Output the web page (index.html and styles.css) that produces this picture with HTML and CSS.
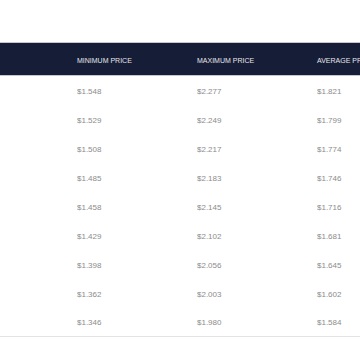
FILE: index.html
```html
<!DOCTYPE html>
<html>
<head>
<meta charset="utf-8">
<link rel="stylesheet" href="styles.css">
</head>
<body>
<div class="wrap">
  <div class="table">
    <div class="row head">
      <div class="cell first"></div>
      <div class="cell">MINIMUM PRICE</div>
      <div class="cell">MAXIMUM PRICE</div>
      <div class="cell">AVERAGE PRICE</div>
    </div>
    <div class="row"><div class="cell first"></div><div class="cell">$1.548</div><div class="cell">$2.277</div><div class="cell">$1.821</div></div>
    <div class="row"><div class="cell first"></div><div class="cell">$1.529</div><div class="cell">$2.249</div><div class="cell">$1.799</div></div>
    <div class="row"><div class="cell first"></div><div class="cell">$1.508</div><div class="cell">$2.217</div><div class="cell">$1.774</div></div>
    <div class="row"><div class="cell first"></div><div class="cell">$1.485</div><div class="cell">$2.183</div><div class="cell">$1.746</div></div>
    <div class="row"><div class="cell first"></div><div class="cell">$1.458</div><div class="cell">$2.145</div><div class="cell">$1.716</div></div>
    <div class="row"><div class="cell first"></div><div class="cell">$1.429</div><div class="cell">$2.102</div><div class="cell">$1.681</div></div>
    <div class="row"><div class="cell first"></div><div class="cell">$1.398</div><div class="cell">$2.056</div><div class="cell">$1.645</div></div>
    <div class="row"><div class="cell first"></div><div class="cell">$1.362</div><div class="cell">$2.003</div><div class="cell">$1.602</div></div>
    <div class="row last"><div class="cell first"></div><div class="cell">$1.346</div><div class="cell">$1.980</div><div class="cell">$1.584</div></div>
  </div>
</div>
</body>
</html>
```
FILE: styles.css
```css
html, body {
  margin: 0;
  padding: 0;
  background: #ffffff;
}
body {
  font-family: "Liberation Sans", Arial, Helvetica, sans-serif;
  width: 360px;
  height: 347px;
  overflow: hidden;
}
.wrap {
  padding-top: 42px;
  overflow: hidden;
  width: 360px;
}
.table {
  display: flex;
  flex-direction: column;
  width: 421px;
}
.row {
  display: grid;
  grid-template-columns: 61px 120px 120px 120px;
  height: 28.875px;
  align-items: center;
  font-size: 8px;
  color: #8c8c8c;
}
.row .cell {
  padding-left: 16px;
  padding-top: 3px;
  white-space: nowrap;
}
.row .first {
  padding: 0;
}
.head {
  height: 32px;
  background: #161d37;
  border-top: 1px solid #c3c7d0;
  border-bottom: 1px solid #c3c7d0;
  color: #e6e7ec;
  font-size: 7px;
}
.head .cell {
  padding-top: 2px;
}
.last {
  border-bottom: 1px solid #e3e3e3;
  height: 28.875px;
}
```
